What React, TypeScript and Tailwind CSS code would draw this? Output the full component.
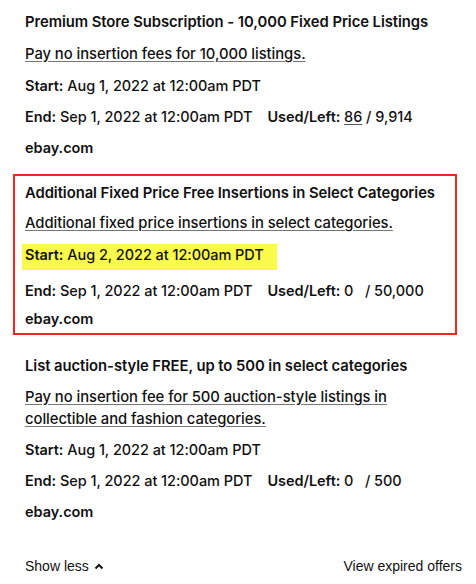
import React from 'react'

const market = { fontFamily: 'Inter, "Noto Sans", sans-serif' }

type Offer = {
  title: string
  link: string[]
  start: string
  end: string
  used: string
  usedLink?: boolean
  left: string
  highlight?: boolean
}

const offers: Offer[] = [
  {
    title: 'Premium Store Subscription - 10,000 Fixed Price Listings',
    link: ['Pay no insertion fees for 10,000 listings.'],
    start: 'Aug 1, 2022 at 12:00am PDT',
    end: 'Sep 1, 2022 at 12:00am PDT',
    used: '86',
    usedLink: true,
    left: '/ 9,914',
  },
  {
    title: 'Additional Fixed Price Free Insertions in Select Categories',
    link: ['Additional fixed price insertions in select categories.'],
    start: 'Aug 2, 2022 at 12:00am PDT',
    end: 'Sep 1, 2022 at 12:00am PDT',
    used: '0',
    left: '\u00a0\u00a0/ 50,000',
    highlight: true,
  },
  {
    title: 'List auction-style FREE, up to 500 in select categories',
    link: [
      'Pay no insertion fee for 500 auction-style listings in',
      'collectible and fashion categories.',
    ],
    start: 'Aug 1, 2022 at 12:00am PDT',
    end: 'Sep 1, 2022 at 12:00am PDT',
    used: '0',
    left: '\u00a0\u00a0/ 500',
  },
]

const EndRow: React.FC<{ offer: Offer }> = ({ offer }) => (
  <div className="leading-[31px] whitespace-nowrap flex">
    <span>
      <span className="font-semibold">End:</span> {offer.end}
    </span>
    <span className="ml-[15px]">
      <span className="font-semibold">Used/Left:</span>{' '}
      <span className={offer.usedLink ? 'underline underline-offset-[2px] decoration-[#555]' : ''}>
        {offer.used}
      </span>{' '}
      {offer.left}
    </span>
  </div>
)

const LinkText: React.FC<{ lines: string[]; className?: string }> = ({ lines, className }) => (
  <div className={`text-[14.8px] ${className ?? ''}`}>
    {lines.map((l) => (
      <div key={l}>
        <a className="underline underline-offset-[2px] decoration-[#777]">{l}</a>
      </div>
    ))}
  </div>
)

export default function App() {
  const [first, boxed, third] = offers
  return (
    <div
      className="w-[476px] h-[584px] bg-white text-[#111] text-[14.5px] font-medium tracking-[-0.05px] overflow-hidden"
      style={market}
    >
      <div className="ml-[13px] w-[444px]">
        {/* first offer */}
        <section className="px-[12px] pt-[7px]">
          <div className="leading-[30px] text-[14.8px] font-semibold whitespace-nowrap">{first.title}</div>
          <LinkText lines={first.link} className="mt-[2px] leading-[31px]" />
          <div className="leading-[31px]">
            <span className="font-semibold">Start:</span> {first.start}
          </div>
          <EndRow offer={first} />
          <div className="leading-[31px] font-semibold">ebay.com</div>
        </section>

        {/* highlighted offer */}
        <section className="mt-[11px] border-2 border-[#f2261d] px-[10px] pt-[2px] pb-[1px]">
          <div className="leading-[30px] text-[14.8px] font-semibold whitespace-nowrap">{boxed.title}</div>
          <LinkText lines={boxed.link} className="leading-[31px]" />
          <div className="h-[31px]">
            <div className="w-fit mt-[5px] h-[26px] leading-[22px] -ml-[3px] pl-[3px] pr-[13px] bg-[#fafa4b]">
              <span className="font-semibold">Start:</span> {boxed.start}
            </div>
          </div>
          <EndRow offer={boxed} />
          <div className="leading-[26px] font-semibold">ebay.com</div>
        </section>

        {/* third offer */}
        <section className="px-[12px] mt-[16px]">
          <div className="leading-[30px] text-[14.8px] font-semibold whitespace-nowrap">{third.title}</div>
          <LinkText lines={third.link} className="mt-[5px] leading-[22px]" />
          <div className="mt-[4px] leading-[31px]">
            <span className="font-semibold">Start:</span> {third.start}
          </div>
          <EndRow offer={third} />
          <div className="leading-[31px] font-semibold">ebay.com</div>
        </section>
      </div>

      <div
        className="mt-[29px] pl-[25px] pr-[14px] flex justify-between items-center leading-[20px] text-[14px] font-normal tracking-normal text-[#111]"
        style={{ fontFamily: '"Liberation Sans", Arial, sans-serif' }}
      >
        <button className="flex items-center gap-[5px]">
          Show less
          <svg width="10" height="7" viewBox="0 0 10 7" fill="none" stroke="#111" strokeWidth="2">
            <path d="M1.5 5.5 L5 2 L8.5 5.5" />
          </svg>
        </button>
        <button>View expired offers</button>
      </div>
    </div>
  )
}
